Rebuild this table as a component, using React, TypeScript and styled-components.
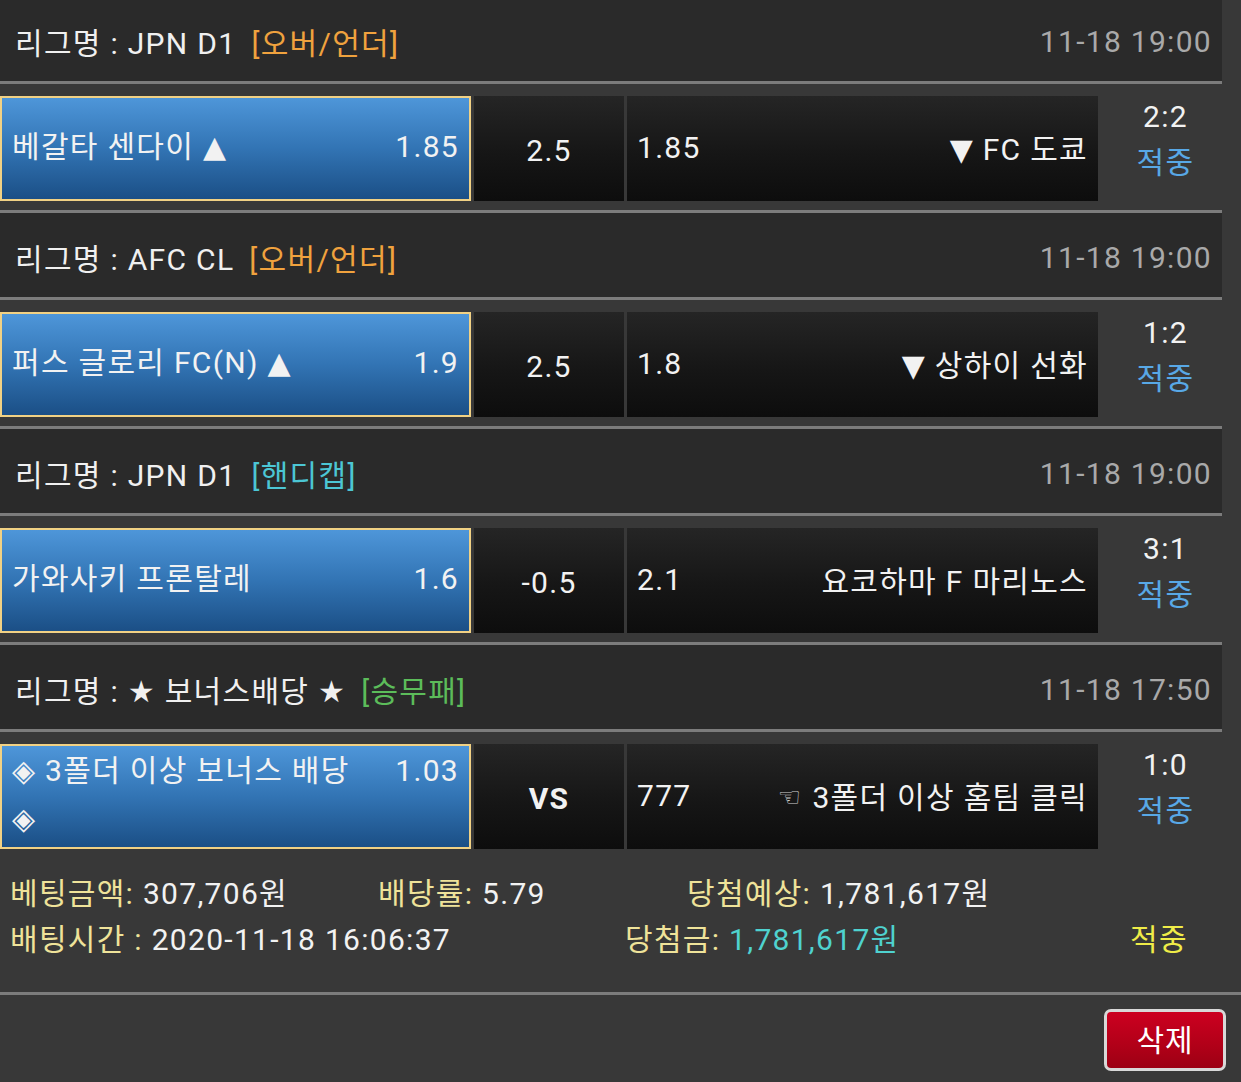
import React from 'react';
import styled, { createGlobalStyle } from 'styled-components';

const GlobalStyle = createGlobalStyle`
  html, body { margin: 0; padding: 0; background: #383838; }
  body {
    font-family: Roboto, "DejaVu Sans", "Noto Sans CJK KR", "Noto Sans", sans-serif;
    color: #f2f2f2;
    font-size: 30px;
    letter-spacing: 1.3px;
  }
  * { box-sizing: border-box; }
`;

type Bet = {
  league: string;
  tag: string;
  tagColor: string;
  time: string;
  home: string;
  homeOdds: string;
  line: string;
  lineBold?: boolean;
  awayOdds: string;
  away: string;
  pointer?: boolean;
  score: string;
};

const bets: Bet[] = [
  { league: 'JPN D1', tag: '[오버/언더]', tagColor: '#f0a23e', time: '11-18 19:00', home: '베갈타 센다이 ▲', homeOdds: '1.85', line: '2.5', awayOdds: '1.85', away: '▼ FC 도쿄', score: '2:2' },
  { league: 'AFC CL', tag: '[오버/언더]', tagColor: '#f0a23e', time: '11-18 19:00', home: '퍼스 글로리 FC(N) ▲', homeOdds: '1.9', line: '2.5', awayOdds: '1.8', away: '▼ 상하이 선화', score: '1:2' },
  { league: 'JPN D1', tag: '[핸디캡]', tagColor: '#4cc6d4', time: '11-18 19:00', home: '가와사키 프론탈레', homeOdds: '1.6', line: '-0.5', awayOdds: '2.1', away: '요코하마 F 마리노스', score: '3:1' },
  { league: '★ 보너스배당 ★', tag: '[승무패]', tagColor: '#5cbc5a', time: '11-18 17:50', home: '◈ 3폴더 이상 보너스 배당 ◈', homeOdds: '1.03', line: 'VS', lineBold: true, awayOdds: '777', away: '3폴더 이상 홈팀 클릭', pointer: true, score: '1:0' },
];

const Page = styled.div`
  min-height: 1082px;
  overflow: hidden;
`;

const List = styled.div`
  width: 1222px;
  margin-top: -3px;
`;

const LeagueHeader = styled.div`
  height: 87px;
  background: #2a2a2a;
  border-bottom: 3px solid #7c7c7c;
  display: flex;
  align-items: center;
  justify-content: space-between;
  padding: 4px 10px 0 15px;
  white-space: nowrap;
`;

const LeagueTitle = styled.div`
  color: #f0f0f0;
`;

const Tag = styled.span<{ $color: string }>`
  color: ${p => p.$color};
  margin-left: 15px;
`;

const Time = styled.div`
  color: #a9a9a9;
`;

const BetRow = styled.div<{ $last?: boolean }>`
  display: grid;
  grid-template-columns: 471px 150px 471px 1fr;
  column-gap: 3px;
  padding: 12px 0 9px;
  border-bottom: ${p => (p.$last ? 'none' : '3px solid #7c7c7c')};
`;

const HomeCell = styled.div`
  height: 105px;
  border: 2px solid #f1d184;
  background: linear-gradient(to bottom, #4e96d9 0%, #3274b4 50%, #1b4f86 100%);
  display: flex;
  align-items: center;
  padding: 0 10px 3px 10px;
`;

const HomeContent = styled.div`
  display: flex;
  align-items: flex-start;
  width: 100%;
  line-height: 48px;
`;

const TeamName = styled.span`
  flex: 1;
  min-width: 0;
`;

const Odds = styled.span`
  margin-left: 36px;
  white-space: nowrap;
`;

const DarkCell = styled.div`
  height: 105px;
  background: linear-gradient(to bottom, #252525 0%, #161616 55%, #0d0d0d 100%);
  display: flex;
  align-items: center;
`;

const LineCell = styled(DarkCell)<{ $bold?: boolean }>`
  justify-content: center;
  padding-top: 3px;
  font-weight: ${p => (p.$bold ? 700 : 400)};
`;

const AwayCell = styled(DarkCell)`
  justify-content: space-between;
  padding: 0 10px 3px 10px;
  white-space: nowrap;
`;

const Pointer = styled.span`
  font-family: "DejaVu Sans", sans-serif;
  font-size: 26px;
  color: #cfcfcf;
  margin-right: 10px;
  vertical-align: 2px;
`;

const ScoreCol = styled.div`
  display: flex;
  flex-direction: column;
  align-items: center;
  line-height: 46px;
  padding-left: 8px;
  margin-top: -2px;
`;

const Hit = styled.span<{ $color: string }>`
  color: ${p => p.$color};
`;

const Summary = styled.div`
  padding: 13px 0 29px 10px;
  border-bottom: 3px solid #7c7c7c;
`;

const SummaryLine = styled.div<{ $cols: string }>`
  display: grid;
  grid-template-columns: ${p => p.$cols};
  line-height: 46px;
  white-space: nowrap;
`;

const Label = styled.span`
  color: #efe39a;
`;

const Value = styled.span<{ $color?: string }>`
  color: ${p => p.$color || '#f2f2f2'};
`;

const Footer = styled.div`
  display: flex;
  justify-content: flex-end;
  padding: 14px 15px 0 0;
`;

const DeleteButton = styled.button`
  width: 122px;
  height: 62px;
  border: 3px solid #d8d8d8;
  border-radius: 7px;
  background: linear-gradient(to bottom, #cc0020 0%, #b10018 60%, #9c0014 100%);
  color: #ffffff;
  font-family: inherit;
  font-size: 30px;
  letter-spacing: 1px;
  padding: 0 0 4px;
  cursor: pointer;
`;

export default function App() {
  return (
    <>
      <GlobalStyle />
      <Page>
        <List>
          {bets.map((b, i) => (
            <div key={i}>
              <LeagueHeader>
                <LeagueTitle>
                  리그명 : {b.league}
                  <Tag $color={b.tagColor}>{b.tag}</Tag>
                </LeagueTitle>
                <Time>{b.time}</Time>
              </LeagueHeader>
              <BetRow $last={i === bets.length - 1}>
                <HomeCell>
                  <HomeContent>
                    <TeamName>{b.home}</TeamName>
                    <Odds>{b.homeOdds}</Odds>
                  </HomeContent>
                </HomeCell>
                <LineCell $bold={b.lineBold}>{b.line}</LineCell>
                <AwayCell>
                  <span>{b.awayOdds}</span>
                  <span>
                    {b.pointer && <Pointer>☜</Pointer>}
                    {b.away}
                  </span>
                </AwayCell>
                <ScoreCol>
                  <span>{b.score}</span>
                  <Hit $color="#58a8e6">적중</Hit>
                </ScoreCol>
              </BetRow>
            </div>
          ))}
        </List>
        <Summary>
          <SummaryLine $cols="368px 309px auto">
            <span>
              <Label>베팅금액:</Label> <Value>307,706원</Value>
            </span>
            <span>
              <Label>배당률:</Label> <Value>5.79</Value>
            </span>
            <span>
              <Label>당첨예상:</Label> <Value>1,781,617원</Value>
            </span>
          </SummaryLine>
          <SummaryLine $cols="615px 505px auto">
            <span>
              <Label>배팅시간 :</Label> <Value>2020-11-18 16:06:37</Value>
            </span>
            <span>
              <Label>당첨금:</Label> <Value $color="#4fd2cf">1,781,617원</Value>
            </span>
            <span>
              <Value $color="#efec48">적중</Value>
            </span>
          </SummaryLine>
        </Summary>
        <Footer>
          <DeleteButton>삭제</DeleteButton>
        </Footer>
      </Page>
    </>
  );
}
